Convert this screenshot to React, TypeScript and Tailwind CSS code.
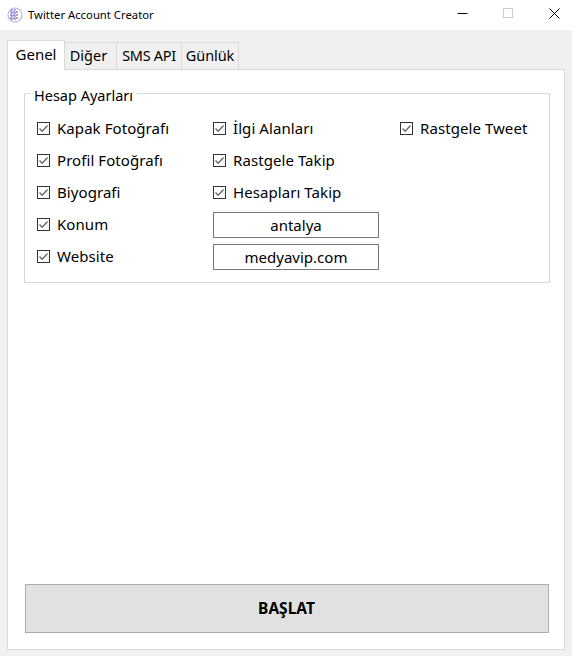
import React from 'react';

const font = "font-['Noto_Sans','DejaVu_Sans',sans-serif]";

const Check: React.FC<{ label: string }> = ({ label }) => (
  <div className="flex h-[26px] items-center gap-[7px] pb-[2px]">
    <svg width="13" height="13" viewBox="0 0 13 13" className="shrink-0">
      <rect x="0.5" y="0.5" width="12" height="12" fill="#fff" stroke="#333" />
      <path d="M2.5 6.5 L5.2 9.2 L10.5 3.5" fill="none" stroke="#666" strokeWidth="1.3" />
    </svg>
    <span className="text-[15px] leading-none tracking-[0.07px] whitespace-nowrap text-black">{label}</span>
  </div>
);

const Field: React.FC<{ value: string }> = ({ value }) => (
  <div className="flex h-[26px] w-[166px] items-center justify-center border border-[#7a7a7a] bg-white text-[15px] text-black">
    {value}
  </div>
);

export default function App() {
  return (
    <div className={`flex h-[656px] w-[572px] flex-col overflow-hidden bg-[#f0f0f0] ${font}`}>
      {/* title bar */}
      <div className="flex h-[30px] shrink-0 items-center bg-white pl-[7px]">
        <svg width="16" height="16" viewBox="0 0 16 16" className="shrink-0">
          <circle cx="8" cy="8" r="7" fill="none" stroke="#b9b4e6" strokeWidth="1.2" />
          <path d="M3 5h8M3 8h9M3 11h8M5 2v12M8 2v12" stroke="#8a80d8" strokeWidth="1.4" strokeDasharray="2 1" />
        </svg>
        <span className="ml-[5px] text-[11.3px] text-black">Twitter Account Creator</span>
        <div className="ml-auto flex items-center gap-[10px] pb-[4px]">
          <div className="flex w-[36px] justify-center">
            <svg width="11" height="11" viewBox="0 0 11 11">
              <path d="M0.5 5.5h10" stroke="#000" strokeWidth="1" />
            </svg>
          </div>
          <div className="flex w-[36px] justify-center">
            <div className="h-[10px] w-[10px] border border-[#cccccc]" />
          </div>
          <div className="flex w-[36px] justify-center">
            <svg width="11" height="11" viewBox="0 0 11 11">
              <path d="M0.5 0.5l10 10M10.5 0.5l-10 10" stroke="#000" strokeWidth="1" fill="none" />
            </svg>
          </div>
        </div>
      </div>

      <div className="flex min-h-0 flex-1 flex-col pt-[10px] pr-[7px] pb-[6px] pl-[7px]">
        {/* tabs */}
        <div className="relative z-10 -mb-px flex h-[30px] shrink-0 items-end text-[14.5px] text-black">
          <div className="flex h-[30px] w-[58px] items-center justify-center border border-b-0 border-[#d9d9d9] bg-white pb-[3px] text-[15px]">
            Genel
          </div>
          <div className="flex h-[28px] w-[52px] items-center justify-center border border-l-0 border-[#d9d9d9] bg-[#f0f0f0] pr-[4px]">
            Diğer
          </div>
          <div className="flex h-[28px] w-[65px] items-center justify-center border border-l-0 border-[#d9d9d9] bg-[#f0f0f0] tracking-[-0.3px]">
            SMS API
          </div>
          <div className="flex h-[28px] w-[57px] items-center justify-center border border-l-0 border-[#d9d9d9] bg-[#f0f0f0] tracking-[-0.1px]">
            Günlük
          </div>
        </div>

        {/* panel */}
        <div className="flex min-h-0 flex-1 flex-col justify-between border border-[#d9d9d9] bg-white pt-[15px] pr-[14px] pb-[16px] pl-[16px]">
          <fieldset className="h-[198px] border border-[#d9d9d9] pr-[16px] pl-[12px]">
            <legend className="-ml-[7px] h-[17px] px-[4px] text-[14.5px] leading-[21px] text-black">Hesap Ayarları</legend>
            <div className="mt-[14px] grid grid-cols-[176px_187px_1fr] gap-y-[6px]">
              <Check label="Kapak Fotoğrafı" />
              <Check label="İlgi Alanları" />
              <Check label="Rastgele Tweet" />
              <Check label="Profil Fotoğrafı" />
              <Check label="Rastgele Takip" />
              <div />
              <Check label="Biyografi" />
              <Check label="Hesapları Takip" />
              <div />
              <Check label="Konum" />
              <Field value="antalya" />
              <div />
              <Check label="Website" />
              <Field value="medyavip.com" />
            </div>
          </fieldset>

          <button className="ml-px flex h-[49px] w-[524px] items-center justify-center border border-[#adadad] bg-[#e1e1e1] pr-[1px] text-[15.5px] font-bold text-black">
            BAŞLAT
          </button>
        </div>
      </div>
    </div>
  );
}
